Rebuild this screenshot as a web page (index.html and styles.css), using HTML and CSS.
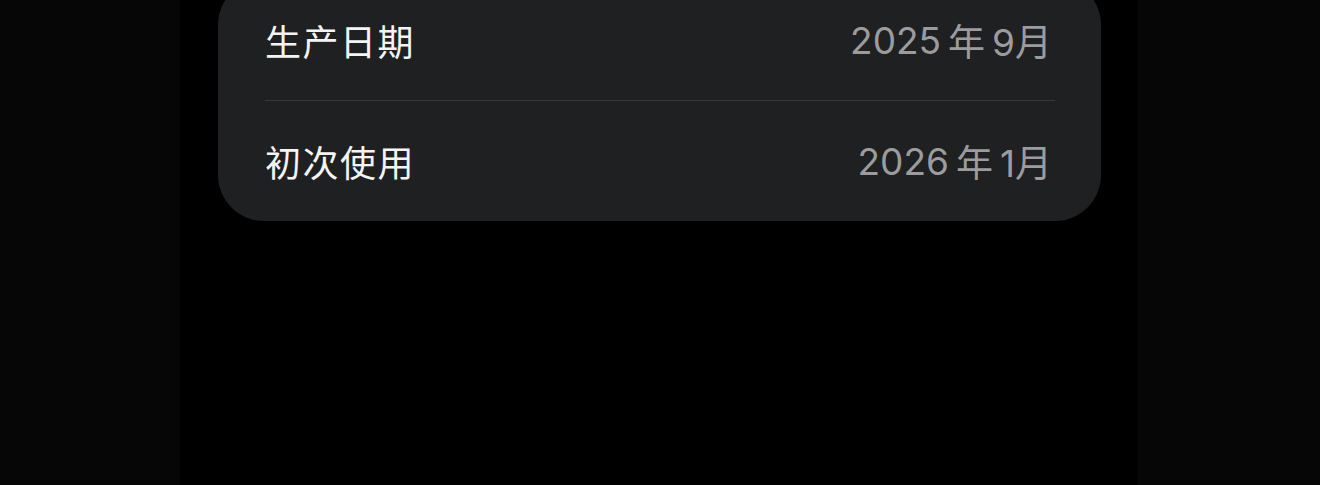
FILE: index.html
```html
<!DOCTYPE html>
<html lang="zh-CN">
<head>
    <meta charset="UTF-8">
    <meta name="viewport" content="width=device-width, initial-scale=1.0">
    <title>关于本机</title>
    <link rel="stylesheet" href="styles.css">
</head>
<body>

<div class="screen">
    <div class="group">
        <div class="row">
            <span class="label">生产日期</span>
            <span class="value">2025<span class="gap"></span>年<span class="gap"></span>9月</span>
        </div>
        <div class="divider"></div>
        <div class="row">
            <span class="label">初次使用</span>
            <span class="value">2026<span class="gap"></span>年<span class="gap"></span>1月</span>
        </div>
    </div>
</div>

</body>
</html>
```

FILE: styles.css
```css
body {
    margin: 0;
    padding: 0;
    height: 485px;
    overflow: hidden;
    background: #060606;
    font-family: Inter, "Noto Sans CJK SC", sans-serif;
}

.screen {
    margin-left: 180px;
    width: 958px;
    height: 485px;
    background: #000;
    overflow: hidden;
}

.group {
    margin-top: -21px;
    margin-left: 38px;
    width: 883px;
    background: #1f2021;
    border-radius: 46px;
    padding: 0 46px 0 47px;
    box-sizing: border-box;
}

.row {
    height: 120px;
    display: flex;
    align-items: center;
    justify-content: space-between;
    padding-right: 3px;
}

.row:first-child {
    padding-top: 1px;
}

.label {
    color: #f4f4f4;
    font-size: 36px;
    letter-spacing: 1.5px;
}

.value {
    color: #9c9c9e;
    font-size: 37px;
    display: flex;
    align-items: center;
}

.gap {
    display: inline-block;
    width: 7px;
}

.divider {
    height: 1px;
    background: #38393a;
}
```
